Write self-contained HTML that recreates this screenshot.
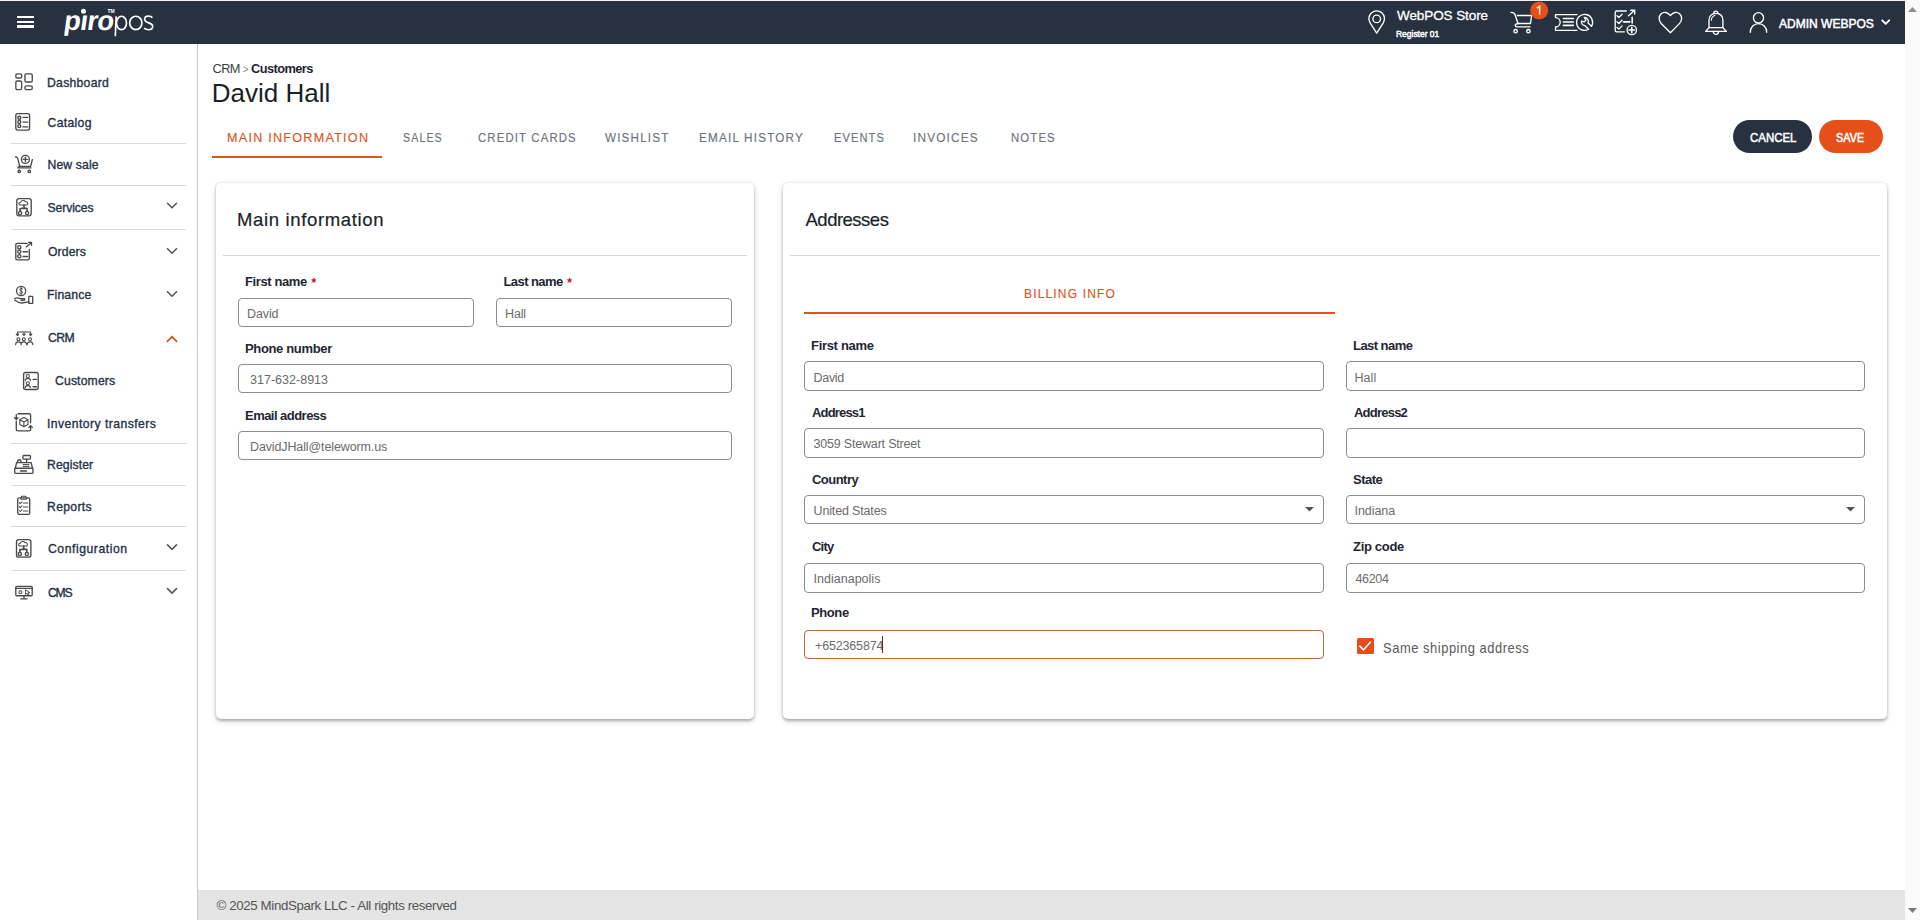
<!DOCTYPE html>
<html><head><meta charset="utf-8">
<style>
*{box-sizing:border-box;margin:0;padding:0}
html,body{width:1920px;height:920px;overflow:hidden;background:#fff;font-family:"Liberation Sans",sans-serif}
.a{position:absolute}
.t{position:absolute;line-height:1;white-space:nowrap}
svg{position:absolute;overflow:visible}
#hdr{position:absolute;left:0;top:1px;width:1905px;height:43px;background:#27313f}
#topline{position:absolute;left:0;top:0;width:1905px;height:1px;background:#f7eef4}
#sb{position:absolute;left:0;top:44px;width:198px;height:876px;background:#fff;border-right:1px solid #c8c8c8}
#scroll{position:absolute;left:1905px;top:0;width:15px;height:920px;background:#fafafa}
#foot{position:absolute;left:198px;top:890px;width:1707px;height:30px;background:#e4e4e4}
.nav{color:#263246;-webkit-text-stroke:0.35px #263246}
.div{position:absolute;left:11px;width:175px;height:1px;background:#dadada}
.tab{color:#6c737c;-webkit-text-stroke:0.15px currentColor}
.sb{-webkit-text-stroke:0.3px currentColor}
.sb2{-webkit-text-stroke:0.2px currentColor}
.sb4{-webkit-text-stroke:0.5px currentColor}
.card{position:absolute;background:#fff;border-radius:5px;box-shadow:0 1.5px 3px rgba(0,0,0,.28),0 2px 7px rgba(0,0,0,.12)}
.lbl{color:#1f2633;font-weight:bold}
.inp{position:absolute;border:1px solid #8c8c8c;border-radius:4px;height:29px;background:#fff}
.val{color:#6b6b6b}
.ic{stroke:#555;fill:none;stroke-width:1.3}
.hi{stroke:#fff;fill:none;stroke-width:1.4}
</style></head><body>
<div id="topline"></div>
<div id="hdr"></div>
<div id="sb"></div>
<div id="foot"></div>
<div id="scroll"></div>
<div class="a" style="left:17px;top:16px;width:17px;height:2.4px;background:#fff"></div>
<div class="a" style="left:17px;top:20.6px;width:17px;height:2.4px;background:#fff"></div>
<div class="a" style="left:17px;top:25.2px;width:17px;height:2.4px;background:#fff"></div>
<div class="t" style="left:62.50px;top:7.02px;font-size:27.5px;letter-spacing:-0.600px;color:#fff;transform:skewX(-8deg);transform-origin:0 23px"><b>p&#305;ro</b></div>
<svg style="left:0;top:0" width="200" height="44"><g fill="none" stroke="#fff" stroke-width="1.65"><path d="M115.3 36.3 L116.2 16.2"/><ellipse cx="121.5" cy="22.9" rx="5" ry="6.7"/><ellipse cx="135.8" cy="22.9" rx="6.1" ry="6.7"/><path d="M152.4 17.7 C151.4 16.4 149.9 16.1 148.4 16.1 C145.9 16.1 144.6 17.4 144.6 19.3 C144.6 23.7 152.7 22 152.7 26.3 C152.7 28.6 150.8 29.7 148.4 29.7 C146.6 29.7 145.1 29.1 144 28"/></g></svg>
<div class="t" style="left:107.50px;top:8.77px;font-size:5px;color:#fff;font-weight:bold">TM</div>
<svg style="left:0;top:0" width="120" height="44"><circle cx="83.5" cy="11.3" r="2.5" fill="#fff"/></svg>
<div id="kWebPOSStore1396" class="t sb" style="left:1397.00px;top:9.17px;font-size:13.5px;letter-spacing:-0.091px;color:#fff">WebPOS Store</div>
<div id="kRegister011396" class="t sb4" style="left:1396.25px;top:28.57px;font-size:9.6px;transform:scaleX(0.8806);transform-origin:0 0;color:#fff">Register 01</div>
<div id="kADMINWEBPOS1777" class="t sb4" style="left:1779.00px;top:17.53px;font-size:12.6px;transform:scaleX(0.9541);transform-origin:0 0;color:#fff">ADMIN WEBPOS</div>
<div id="kDashboard47" class="t nav" style="left:47.00px;top:76.67px;font-size:12.2px;letter-spacing:0.275px;">Dashboard</div>
<div id="kCatalog47" class="t nav" style="left:47.50px;top:117.47px;font-size:12.2px;letter-spacing:0.333px;">Catalog</div>
<div id="kNewsale47" class="t nav" style="left:47.50px;top:158.57px;font-size:12.2px;letter-spacing:0.143px;">New sale</div>
<div id="kServices47" class="t nav" style="left:47.50px;top:202.27px;font-size:12.2px;letter-spacing:-0.086px;">Services</div>
<div id="kOrders47" class="t nav" style="left:48.00px;top:246.17px;font-size:12.2px;letter-spacing:0.120px;">Orders</div>
<div id="kFinance47" class="t nav" style="left:47.00px;top:289.27px;font-size:12.2px;letter-spacing:0.133px;">Finance</div>
<div id="kCRM47" class="t nav" style="left:48.00px;top:332.37px;font-size:12.2px;letter-spacing:-0.500px;">CRM</div>
<div id="kCustomers54" class="t nav" style="left:55.00px;top:375.37px;font-size:12.2px;letter-spacing:0.150px;">Customers</div>
<div id="kInventorytrans47" class="t nav" style="left:47.00px;top:417.67px;font-size:12.2px;letter-spacing:0.444px;">Inventory transfers</div>
<div id="kRegister47" class="t nav" style="left:47.00px;top:458.57px;font-size:12.2px;letter-spacing:0.114px;">Register</div>
<div id="kReports47" class="t nav" style="left:47.00px;top:500.57px;font-size:12.2px;letter-spacing:0.333px;">Reports</div>
<div id="kConfiguration47" class="t nav" style="left:48.00px;top:543.47px;font-size:12.2px;letter-spacing:0.550px;">Configuration</div>
<div id="kCMS47" class="t nav" style="left:48.00px;top:587.17px;font-size:12.2px;letter-spacing:-1.200px;">CMS</div>
<div class="div" style="top:143px"></div>
<div class="div" style="top:185px"></div>
<div class="div" style="top:229px"></div>
<div class="div" style="top:443px"></div>
<div class="div" style="top:485px"></div>
<div class="div" style="top:526px"></div>
<div class="div" style="top:570px"></div>
<div id="kCRMgtCustomers212" class="t" style="left:212.50px;top:62.96px;font-size:12.8px;letter-spacing:-0.586px;color:#3a3f47">CRM <span style="color:#888;font-size:10px">&gt;</span> <b style="color:#1f2633">Customers</b></div>
<div id="kDavidHall213" class="t" style="left:211.75px;top:79.99px;font-size:26px;color:#1a1f28">David Hall</div>
<div id="kMAININFORMATIO226" class="t tab" style="left:227.00px;top:131.00px;font-size:13px;letter-spacing:1.300px;transform:scaleX(0.9681);transform-origin:0 0;color:#d9541e">MAIN INFORMATION</div>
<div id="kSALES402" class="t tab" style="left:402.50px;top:131.00px;font-size:13px;letter-spacing:1.300px;transform:scaleX(0.8216);transform-origin:0 0;color:#6c737c">SALES</div>
<div id="kCREDITCARDS477" class="t tab" style="left:477.50px;top:131.00px;font-size:13px;letter-spacing:1.300px;transform:scaleX(0.8757);transform-origin:0 0;color:#6c737c">CREDIT CARDS</div>
<div id="kWISHLIST605" class="t tab" style="left:605.00px;top:131.00px;font-size:13px;letter-spacing:1.300px;transform:scaleX(0.8987);transform-origin:0 0;color:#6c737c">WISHLIST</div>
<div id="kEMAILHISTORY698" class="t tab" style="left:698.50px;top:131.00px;font-size:13px;letter-spacing:1.300px;transform:scaleX(0.9027);transform-origin:0 0;color:#6c737c">EMAIL HISTORY</div>
<div id="kEVENTS833" class="t tab" style="left:833.50px;top:131.00px;font-size:13px;letter-spacing:1.300px;transform:scaleX(0.8518);transform-origin:0 0;color:#6c737c">EVENTS</div>
<div id="kINVOICES913" class="t tab" style="left:913.00px;top:131.00px;font-size:13px;letter-spacing:1.300px;transform:scaleX(0.9075);transform-origin:0 0;color:#6c737c">INVOICES</div>
<div id="kNOTES1011" class="t tab" style="left:1011.00px;top:131.00px;font-size:13px;letter-spacing:1.300px;transform:scaleX(0.8738);transform-origin:0 0;color:#6c737c">NOTES</div>
<div class="a" style="left:212px;top:156px;width:170px;height:2px;background:#d9541e"></div>
<div class="a" style="left:1733px;top:120px;width:79px;height:33px;border-radius:17px;background:#27313f"></div>
<div class="a" style="left:1819px;top:120px;width:64px;height:33px;border-radius:17px;background:#e5501a"></div>
<div id="kCANCEL1750" class="t sb4" style="left:1750.00px;top:132.10px;font-size:12.4px;transform:scaleX(0.9223);transform-origin:0 0;color:#fff">CANCEL</div>
<div id="kSAVE1835" class="t sb4" style="left:1836.00px;top:132.10px;font-size:12.4px;transform:scaleX(0.8769);transform-origin:0 0;color:#fff">SAVE</div>
<div class="card" style="left:216px;top:183px;width:538px;height:536px"></div>
<div class="card" style="left:783px;top:183px;width:1104px;height:536px"></div>
<div id="kMaininformatio238" class="t sb2" style="left:237.00px;top:210.74px;font-size:18.5px;letter-spacing:0.653px;color:#1a1f28">Main information</div>
<div class="a" style="left:223px;top:255px;width:524px;height:1px;background:#d6d6d6"></div>
<div id="kAddresses804" class="t sb2" style="left:805.50px;top:210.74px;font-size:18.5px;letter-spacing:-0.500px;color:#1a1f28">Addresses</div>
<div class="a" style="left:790px;top:255px;width:1090px;height:1px;background:#d6d6d6"></div>
<div id="kFirstname245" class="t lbl" style="left:245.00px;top:274.80px;font-size:13px;letter-spacing:-0.400px;">First name</div>
<div class="inp" style="left:238px;top:298px;width:236px;height:29px;border-color:#8c8c8c"></div>
<div id="kDavid247" class="t val" style="left:247.00px;top:308.42px;font-size:12.5px;letter-spacing:-0.100px;">David</div>
<div id="kLastname503" class="t lbl" style="left:503.50px;top:274.80px;font-size:13px;letter-spacing:-0.575px;">Last name</div>
<div class="inp" style="left:496px;top:298px;width:236px;height:29px;border-color:#8c8c8c"></div>
<div id="kHall505" class="t val" style="left:505.00px;top:308.42px;font-size:12.5px;letter-spacing:-0.133px;">Hall</div>
<div class="t" style="left:311.5px;top:277px;font-size:12px;color:#d0021b;font-weight:bold">*</div>
<div class="t" style="left:567.2px;top:277px;font-size:12px;color:#d0021b;font-weight:bold">*</div>
<div id="kPhonenumber245" class="t lbl" style="left:245.00px;top:342.30px;font-size:13px;letter-spacing:-0.345px;">Phone number</div>
<div class="inp" style="left:238px;top:364px;width:494px;height:29px;border-color:#8c8c8c"></div>
<div id="k3176328913250" class="t val" style="left:250.00px;top:374.42px;font-size:12.5px;letter-spacing:0.018px;">317-632-8913</div>
<div id="kEmailaddress245" class="t lbl" style="left:245.00px;top:409.40px;font-size:13px;letter-spacing:-0.533px;">Email address</div>
<div class="inp" style="left:238px;top:431px;width:494px;height:29px;border-color:#8c8c8c"></div>
<div id="kDavidJHalltele250" class="t val" style="left:250.00px;top:441.42px;font-size:12.5px;letter-spacing:-0.124px;">DavidJHall@teleworm.us</div>
<div id="kBILLINGINFO1023" class="t tab" style="left:1023.50px;top:287.30px;font-size:13px;letter-spacing:1.300px;transform:scaleX(0.9185);transform-origin:0 0;color:#d9541e">BILLING INFO</div>
<div class="a" style="left:804px;top:312px;width:531px;height:2px;background:#d9541e"></div>
<div id="kFirstname811" class="t lbl" style="left:811.00px;top:338.50px;font-size:13px;letter-spacing:-0.311px;">First name</div>
<div class="inp" style="left:804px;top:361px;width:520px;height:30px;border-color:#8c8c8c"></div>
<div id="kDavid813" class="t val" style="left:813.50px;top:371.52px;font-size:12.5px;letter-spacing:-0.300px;">David</div>
<div id="kLastname1353" class="t lbl" style="left:1353.00px;top:338.50px;font-size:13px;letter-spacing:-0.550px;">Last name</div>
<div class="inp" style="left:1346px;top:361px;width:519px;height:30px;border-color:#8c8c8c"></div>
<div id="kHall1354" class="t val" style="left:1354.50px;top:371.52px;font-size:12.5px;letter-spacing:0.067px;">Hall</div>
<div id="kAddress1811" class="t lbl" style="left:812.00px;top:405.50px;font-size:13px;letter-spacing:-0.829px;">Address1</div>
<div class="inp" style="left:804px;top:428px;width:520px;height:30px;border-color:#8c8c8c"></div>
<div id="k3059StewartStr813" class="t val" style="left:813.50px;top:438.02px;font-size:12.5px;letter-spacing:-0.189px;">3059 Stewart Street</div>
<div id="kAddress21353" class="t lbl" style="left:1354.00px;top:405.50px;font-size:13px;letter-spacing:-0.771px;">Address2</div>
<div class="inp" style="left:1346px;top:428px;width:519px;height:30px;border-color:#8c8c8c"></div>
<div id="kCountry811" class="t lbl" style="left:812.00px;top:472.70px;font-size:13px;letter-spacing:-0.533px;">Country</div>
<div class="inp" style="left:804px;top:495px;width:520px;height:29px;border-color:#8c8c8c"></div>
<div id="kUnitedStates813" class="t val" style="left:813.50px;top:504.82px;font-size:12.5px;letter-spacing:-0.150px;">United States</div>
<svg style="left:1304.6px;top:507px" width="10" height="5"><path d="M0 0 L9 0 L4.5 4.5Z" fill="#555"/></svg>
<div id="kState1353" class="t lbl" style="left:1353.00px;top:472.70px;font-size:13px;letter-spacing:-0.500px;">State</div>
<div class="inp" style="left:1346px;top:495px;width:519px;height:29px;border-color:#8c8c8c"></div>
<div id="kIndiana1354" class="t val" style="left:1354.50px;top:504.82px;font-size:12.5px;letter-spacing:-0.067px;">Indiana</div>
<svg style="left:1845.6px;top:507px" width="10" height="5"><path d="M0 0 L9 0 L4.5 4.5Z" fill="#555"/></svg>
<div id="kCity811" class="t lbl" style="left:812.00px;top:540.30px;font-size:13px;letter-spacing:-0.800px;">City</div>
<div class="inp" style="left:804px;top:563px;width:520px;height:30px;border-color:#8c8c8c"></div>
<div id="kIndianapolis813" class="t val" style="left:813.50px;top:572.82px;font-size:12.5px;letter-spacing:0.018px;">Indianapolis</div>
<div id="kZipcode1353" class="t lbl" style="left:1353.00px;top:540.30px;font-size:13px;letter-spacing:-0.314px;">Zip code</div>
<div class="inp" style="left:1346px;top:563px;width:519px;height:30px;border-color:#8c8c8c"></div>
<div id="k462041354" class="t val" style="left:1355.50px;top:572.82px;font-size:12.5px;letter-spacing:-0.350px;">46204</div>
<div id="kPhone811" class="t lbl" style="left:811.00px;top:606.30px;font-size:13px;letter-spacing:-0.400px;">Phone</div>
<div class="inp" style="left:804px;top:630px;width:520px;height:29px;border-color:#c0683f"></div>
<div id="k652365874814" class="t val" style="left:815.00px;top:639.62px;font-size:12.5px;letter-spacing:-0.156px;">+652365874</div>
<div class="a" style="left:882px;top:636px;width:1.2px;height:16.5px;background:#6b2a1a"></div>
<div class="a" style="left:1357.2px;top:637.7px;width:16.4px;height:16px;border-radius:1.5px;background:#e54e1b"></div>
<svg style="left:1357.2px;top:637.7px" width="17" height="16"><path d="M2.4 7.6 L6.4 11.9 L13.8 3.7" stroke="#fff" stroke-width="1.55" fill="none"/></svg>
<div id="kSameshippingad1383" class="t" style="left:1383.00px;top:641.33px;font-size:14.5px;letter-spacing:0.600px;transform:scaleX(0.8914);transform-origin:0 0;color:#5a5a5a">Same shipping address</div>
<div id="kcopy2025MindSp216" class="t" style="left:216.50px;top:899.04px;font-size:13.3px;letter-spacing:-0.380px;color:#555">&copy; 2025 MindSpark LLC - All rights reserved</div>
<svg style="left:1908px;top:7px" width="9" height="5"><path d="M0 5 L9 5 L4.5 0Z" fill="#8c8c8c"/></svg>
<svg style="left:1908px;top:908px" width="9" height="5"><path d="M0 0 L9 0 L4.5 5Z" fill="#7a7a7a"/></svg>
<svg style="left:0;top:0" width="1920" height="920" viewBox="0 0 1920 920">
<g fill="none" stroke="#fff" stroke-width="1.35" stroke-linecap="round" stroke-linejoin="round">
 <!-- pin -->
 <path d="M1376.7 33.2 L1370.1 22.9 A7.8 7.8 0 1 1 1383.3 22.9 Z"/>
 <circle cx="1376.7" cy="18.9" r="3.8"/>
 <!-- cart -->
 <path d="M1511 12.3 Q1514.3 12.3 1515 14.5 L1518 23.5 L1530.5 23.5 L1531.6 15.5 L1517.3 15.5"/>
 <path d="M1518 23.5 Q1515.2 24 1515.2 25.4 Q1515.2 26.8 1517 26.8 L1530 26.8"/>
 <circle cx="1515.6" cy="31.2" r="1.7"/>
 <circle cx="1528.4" cy="31.2" r="1.7"/>
 <!-- ticket -->
 <path d="M1577 14.6 L1555.5 14.6 L1555.5 17.6 A4.7 4.7 0 0 1 1555.5 27 L1555.5 30.3 L1577 30.3"/>
 <path d="M1563.5 18.5 L1573.2 18.5 M1563.5 22 L1573.2 22 M1563.5 25.4 L1573.2 25.4" stroke-width="1.7"/>
 <!-- wrench -->
 <path d="M1588.6 29.3 A8 8 0 1 1 1591.5 26.4 L1587.9 22.8 A3.7 3.7 0 0 0 1584.3 17.5 L1585.9 19.9 L1584.3 21.9 L1581.6 21 A3.7 3.7 0 0 0 1585 25.7 Z" stroke-width="1.3"/>
 <!-- checklist -->
 <path d="M1626.3 11 L1616.8 11 Q1615.2 11 1615.2 12.6 L1615.2 30.2 Q1615.2 31.8 1616.8 31.8 L1624.4 31.8"/>
 <path d="M1617 15.8 L1618.9 17.5 L1622 14.3 M1617 21.8 L1618.9 23.5 L1622 20.3 M1617 27.4 L1618.9 29.1 L1622 25.9"/>
 <path d="M1623.6 21.9 L1629.8 21.9 M1632.2 17.4 L1632.2 23" stroke-width="1.6"/>
 <path d="M1628.5 15.7 L1634.6 10.3 M1630.7 10.2 L1634.7 10.2 L1634.7 14"/>
 <circle cx="1631.8" cy="30" r="4.7"/>
 <path d="M1631.8 27.3 L1631.8 32.7 M1629.1 30 L1634.5 30" stroke-width="1.6"/>
 <!-- heart -->
 <path d="M1670.4 15.6 C1668 12.1 1663.8 11.4 1661.2 13.8 C1658.4 16.3 1658.6 20.8 1661.2 23.4 L1670.4 32.8 L1679.6 23.4 C1682.2 20.8 1682.4 16.3 1679.6 13.8 C1677 11.4 1672.8 12.1 1670.4 15.6 Z"/>
 <!-- bell -->
 <path d="M1713.8 13.1 A2 2 0 0 1 1717.8 13.1"/>
 <path d="M1709 27.6 L1709 20.6 C1709 15.8 1711.8 13.3 1715.9 13.3 C1720 13.3 1722.9 15.8 1722.9 20.6 L1722.9 27.6"/>
 <path d="M1705.6 31.4 L1709 27.6 L1722.9 27.6 L1726.4 31.4 Z"/>
 <path d="M1713.3 31.8 A2.6 2.6 0 0 0 1718.5 31.8"/>
 <path d="M1711.3 20.3 C1711.4 17.9 1712.6 16.2 1714.9 15.5" stroke-width="1.1"/>
 <!-- user -->
 <circle cx="1758.5" cy="17.8" r="5.1"/>
 <path d="M1750.3 32.3 C1750.3 27 1754 23.6 1758.5 23.6 C1763 23.6 1766.7 27 1766.7 32.3"/>
 <!-- admin chevron -->
 <path d="M1882.2 20.3 L1885.7 23.8 L1889.2 20.3" stroke-width="1.9"/>
</g>
<circle cx="1539.2" cy="10.4" r="9" fill="#e4501c"/>
<path d="M1536.9 8.1 L1539.6 6.3 L1539.6 14.6" fill="none" stroke="#fff" stroke-width="1.4"/>

<g fill="none" stroke="#4a4a4a" stroke-width="1.35" stroke-linecap="round" stroke-linejoin="round">
 <!-- dashboard -->
 <rect x="15.85" y="73.85" width="5.8" height="4.1" rx="1.3"/>
 <rect x="15.85" y="80.95" width="5.8" height="8.7" rx="1.3"/>
 <rect x="24.95" y="73.85" width="7.3" height="8.1" rx="1.3"/>
 <rect x="24.95" y="85.85" width="7.3" height="3.8" rx="1.3"/>
 <!-- catalog -->
 <rect x="15.8" y="113.6" width="13.8" height="16.5" rx="2"/>
 <circle cx="19.3" cy="117.7" r="1.5"/><circle cx="19.3" cy="121.9" r="1.5"/><circle cx="19.3" cy="126.1" r="1.5"/>
 <path d="M23 117.3 L27.8 117.3 M23 122.1 L27.8 122.1 M23 126.9 L27.8 126.9"/>
 <!-- new sale -->
 <path d="M15.5 157 Q17.4 157 17.8 158.6 L19.8 166.3 L30.6 166.3 L32.4 159.6"/>
 <path d="M19.8 166.3 Q18 166.6 18 167.9 L31 167.9"/>
 <circle cx="19.2" cy="171.4" r="1.2"/><circle cx="29.3" cy="171.4" r="1.2"/>
 <circle cx="25.4" cy="159.4" r="4"/>
 <path d="M25.4 157.2 L25.4 161.6 M23.2 159.4 L27.6 159.4" stroke-width="1.4"/>
 <!-- services -->
 <rect x="16.8" y="198.6" width="14.4" height="17.2" rx="2.2"/>
 <path d="M20.3 205 C18.4 205 18.6 202.1 20.6 202.3 C21 200.2 24.5 199.8 25.3 201.6 C27.5 201.1 28.6 204.2 26.9 205 Z" stroke-width="1.1"/>
 <path d="M24 205 L24 208 M21.5 208.4 L26.5 208.4 M20.1 208.6 L20.1 211.4 M27.1 208.6 L27.1 211.4" stroke-width="1.6"/>
 <circle cx="20.1" cy="213" r="1.6"/><circle cx="27.1" cy="213" r="1.6"/>
 <!-- orders -->
 <path d="M27 243.4 L17.1 243.4 Q15.8 243.4 15.8 244.7 L15.8 258.5 Q15.8 259.8 17.1 259.8 L28 259.8 Q29.3 259.8 29.3 258.5 L29.3 249.5"/>
 <circle cx="19.3" cy="247.2" r="1.6"/><circle cx="19.3" cy="251.6" r="1.6"/><circle cx="19.3" cy="256.2" r="1.6"/>
 <path d="M23.1 251.8 L27.5 251.8 M23.1 256.4 L27.5 256.4" stroke-width="1.5"/>
 <path d="M26.3 246.9 L31.4 242.4 M28.4 242.3 L31.5 242.3 L31.5 245.3"/>
 <!-- finance -->
 <circle cx="21.1" cy="291" r="4.6"/>
 <path d="M22.6 288.9 C21.8 288 19.6 288.2 19.7 289.6 C19.8 291 22.6 290.6 22.6 292.3 C22.6 293.8 20.3 293.9 19.5 293 M21.1 287.3 L21.1 294.7" stroke-width="1"/>
 <path d="M14.8 298.6 C16.5 297.6 18.5 297.8 20 298.6 L24 298.6 C25 298.6 25 300.2 24 300.2 L21 300.2 M14.8 300.1 C17 301.6 19 303 21.5 303 L28.8 301.9"/>
 <rect x="28.8" y="296.4" width="3.9" height="7" rx="0.5"/>
 <!-- crm -->
 <path d="M17.5 335.5 L17.5 332 L30.6 332 L30.6 335.5 M24 332 L24 335.3 M16.2 334.2 L17.5 335.6 L18.8 334.2 M29.3 334.2 L30.6 335.6 L31.9 334.2 M22.7 334 L24 335.4 L25.3 334" stroke-width="1.1"/>
 <circle cx="18.4" cy="339.2" r="1.5" stroke-width="1.1"/><circle cx="23.8" cy="339.2" r="1.5" stroke-width="1.1"/><circle cx="30" cy="339.2" r="1.5" stroke-width="1.1"/>
 <path d="M15.6 344.8 C15.6 342.8 16.7 341.9 18.4 341.9 C20.1 341.9 21.2 342.8 21.2 344.8 M21 344.8 C21 342.8 22.1 341.9 23.8 341.9 C25.5 341.9 26.6 342.8 26.6 344.8 M27.2 344.8 C27.2 342.8 28.3 341.9 30 341.9 C31.7 341.9 32.8 342.8 32.8 344.8" stroke-width="1.1"/>
 <!-- customers -->
 <rect x="23.6" y="372.5" width="14.6" height="17" rx="2"/>
 <circle cx="27.8" cy="376.1" r="1.6" stroke-width="1.1"/><circle cx="27.8" cy="383.3" r="1.6" stroke-width="1.1"/>
 <path d="M25.2 380.6 C25.2 379.1 26.3 378.4 27.8 378.4 C29.3 378.4 30.4 379.1 30.4 380.6 M25.2 387.8 C25.2 386.3 26.3 385.6 27.8 385.6 C29.3 385.6 30.4 386.3 30.4 387.8" stroke-width="1.1"/>
 <path d="M33.2 379.4 L36.4 379.4 M33.2 386.8 L36.4 386.8" stroke-width="1.4"/>
 <!-- inventory -->
 <path d="M18 413.7 L29 413.7 Q30.6 413.7 30.6 415.3 L30.6 422.8 M30.6 430.2 L30.6 425.8 M28.9 427.4 L30.6 425.6 L32.3 427.4 M29.5 430.9 L18.1 430.9 Q16.3 430.9 16.3 429.2 L16.3 421.2 M16.3 414.6 L16.3 419.4 M14.6 417.8 L16.3 419.6 L18 417.8"/>
 <path d="M23.9 417.4 L28 419.7 L28 424.5 L23.9 426.8 L19.8 424.5 L19.8 419.7 Z M19.8 419.7 L23.9 422 L28 419.7 M23.9 422 L23.9 426.8" stroke-width="1.1"/>
 <!-- register -->
 <rect x="22.9" y="455.5" width="7.6" height="3.6" rx="1"/>
 <path d="M26.6 459.1 L26.6 462.5"/>
 <path d="M17.6 462.5 L17.6 461 Q17.6 459.7 19.3 459.7 Q21 459.7 21 461 L21 462.5"/>
 <path d="M15.4 468.2 L16.6 462.6 L31.2 462.6 L32.4 468.2"/>
 <rect x="14.7" y="468.2" width="18.3" height="5.2" rx="0.8"/>
 <path d="M20.4 471 L26.6 471" stroke-width="1.3"/>
 <path d="M23.3 464.6 L29.8 464.6 M23.3 466.5 L29.8 466.5" stroke-width="1.05" stroke-dasharray="1.3 0.9"/>
 <!-- reports -->
 <rect x="17.7" y="497.8" width="12" height="16.5" rx="1.6"/>
 <path d="M21 497.8 L21.8 496.3 L25.6 496.3 L26.4 497.8 L26.4 499.2 L21 499.2 Z" stroke-width="1.1"/>
 <path d="M19.3 502.6 L20.3 503.6 L22 501.8 M19.3 506.6 L20.3 507.6 L22 505.8 M19.3 510.5 L20.3 511.5 L22 509.7 M23.4 503 L28 503 M23.4 507 L28 507 M23.4 510.9 L28 510.9" stroke-width="1.05"/>
 <!-- configuration -->
 <rect x="16.5" y="539.6" width="14.4" height="17.6" rx="2.2"/>
 <path d="M20 546 C18.1 546 18.3 543.1 20.3 543.3 C20.7 541.2 24.2 540.8 25 542.6 C27.2 542.1 28.3 545.2 26.6 546 Z" stroke-width="1.1"/>
 <path d="M23.7 546 L23.7 549 M21.2 549.4 L26.2 549.4 M19.8 549.6 L19.8 552.4 M26.8 549.6 L26.8 552.4" stroke-width="1.6"/>
 <circle cx="19.8" cy="554" r="1.6"/><circle cx="26.8" cy="554" r="1.6"/>
 <!-- cms -->
 <rect x="15.8" y="586.3" width="16.4" height="9.4" rx="1"/>
 <path d="M15.8 588.3 L32.2 588.3 M24 595.7 L24 598.6 M20.8 598.8 L27.2 598.8"/>
 <circle cx="20.4" cy="592.2" r="1.5" stroke-width="1.1"/>
 <path d="M25.6 590.2 L25.6 594.5 L26.8 593.3 L28 595 L28.8 594.5 L27.8 592.9 L29.4 592.7 Z" stroke-width="1"/>
</g>
<g fill="none" stroke="#5a5a5a" stroke-width="1.6" stroke-linecap="round" stroke-linejoin="round">
 <path d="M167.5 203.3 L172 207.8 L176.5 203.3"/>
 <path d="M167.5 248.7 L172 253.2 L176.5 248.7"/>
 <path d="M167.5 291.7 L172 296.2 L176.5 291.7"/>
 <path d="M167.5 544.9 L172 549.4 L176.5 544.9"/>
 <path d="M167.5 588.6 L172 593.1 L176.5 588.6"/>
</g>
<path d="M167.3 341.4 L172 336.8 L176.7 341.4" fill="none" stroke="#d9541e" stroke-width="1.7" stroke-linecap="round"/>
</svg>
</body></html>
